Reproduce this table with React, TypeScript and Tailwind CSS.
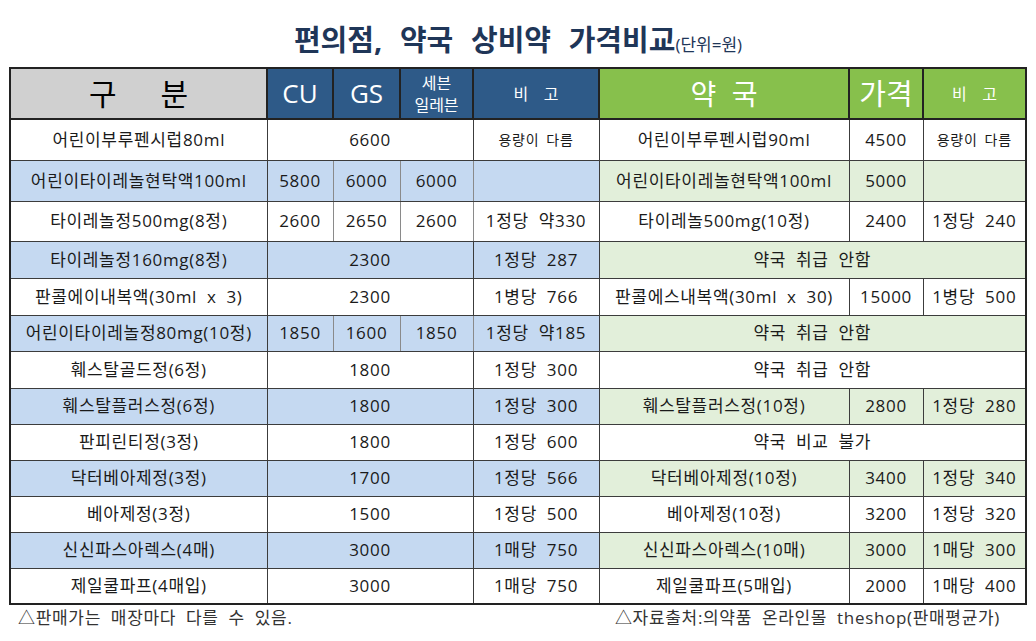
import React from 'react';

type Row = {
  name: string;
  cvs: string[];
  note: string;
  pharmacy: string | [string, string, string];
};

const rows: Row[] = [
  { name: '어린이부루펜시럽80ml', cvs: ['6600'], note: '용량이 다름', pharmacy: ['어린이부루펜시럽90ml', '4500', '용량이 다름'] },
  { name: '어린이타이레놀현탁액100ml', cvs: ['5800', '6000', '6000'], note: '', pharmacy: ['어린이타이레놀현탁액100ml', '5000', ''] },
  { name: '타이레놀정500mg(8정)', cvs: ['2600', '2650', '2600'], note: '1정당 약330', pharmacy: ['타이레놀500mg(10정)', '2400', '1정당 240'] },
  { name: '타이레놀정160mg(8정)', cvs: ['2300'], note: '1정당 287', pharmacy: '약국 취급 안함' },
  { name: '판콜에이내복액(30ml x 3)', cvs: ['2300'], note: '1병당 766', pharmacy: ['판콜에스내복액(30ml x 30)', '15000', '1병당 500'] },
  { name: '어린이타이레놀정80mg(10정)', cvs: ['1850', '1600', '1850'], note: '1정당 약185', pharmacy: '약국 취급 안함' },
  { name: '훼스탈골드정(6정)', cvs: ['1800'], note: '1정당 300', pharmacy: '약국 취급 안함' },
  { name: '훼스탈플러스정(6정)', cvs: ['1800'], note: '1정당 300', pharmacy: ['훼스탈플러스정(10정)', '2800', '1정당 280'] },
  { name: '판피린티정(3정)', cvs: ['1800'], note: '1정당 600', pharmacy: '약국 비교 불가' },
  { name: '닥터베아제정(3정)', cvs: ['1700'], note: '1정당 566', pharmacy: ['닥터베아제정(10정)', '3400', '1정당 340'] },
  { name: '베아제정(3정)', cvs: ['1500'], note: '1정당 500', pharmacy: ['베아제정(10정)', '3200', '1정당 320'] },
  { name: '신신파스아렉스(4매)', cvs: ['3000'], note: '1매당 750', pharmacy: ['신신파스아렉스(10매)', '3000', '1매당 300'] },
  { name: '제일쿨파프(4매입)', cvs: ['3000'], note: '1매당 750', pharmacy: ['제일쿨파프(5매입)', '2000', '1매당 400'] },
];

const rowHeights = ['h-[41px]', 'h-[41px]', 'h-[40px]', 'h-[37px]', 'h-[37px]', 'h-[36px]', 'h-[37px]', 'h-[36px]', 'h-[36px]', 'h-[36px]', 'h-[36px]', 'h-[36px]', 'h-[36px]'];

const td = 'border border-[#3c3c3c] p-0 text-center align-middle whitespace-nowrap';
const th = `${td} border-2 border-[#222] font-normal text-white tracking-normal`;

export default function App() {
  return (
    <div className="w-[1036px] h-[641px] bg-white text-[#1a1a1a] font-['Open_Sans','Noto_Sans_CJK_KR',sans-serif] [word-spacing:0.3em]">
      <div className="h-[67px] flex items-center justify-center pt-[12px]">
        <h1 className="text-[29px] font-bold text-[#1f3658] leading-none [word-spacing:0.35em]">
          편의점, 약국 상비약 가격비교
          <span className="text-[17px] font-normal [word-spacing:0]">(단위=원)</span>
        </h1>
      </div>

      <div className="pl-[9px]">
        <table className="w-[1016px] table-fixed border-collapse border-2 border-[#222] text-[17px] tracking-[0.04em]">
          <colgroup>
            <col className="w-[257px]" />
            <col className="w-[66px]" />
            <col className="w-[67px]" />
            <col className="w-[73px]" />
            <col className="w-[126px]" />
            <col className="w-[250px]" />
            <col className="w-[74px]" />
            <col className="w-[103px]" />
          </colgroup>
          <thead>
            <tr className="h-[51px]">
              <th className={`${th} bg-[#d0d0d0] text-[30px] !text-black`}>
                <span className="inline-flex gap-[44px]">
                  <span>구</span>
                  <span>분</span>
                </span>
              </th>
              <th className={`${th} bg-[#2e5a88] text-[26px]`}>CU</th>
              <th className={`${th} bg-[#2e5a88] text-[26px]`}>GS</th>
              <th className={`${th} bg-[#2e5a88] text-[16px]`}>
                <div className="flex flex-col items-center gap-[2px] leading-[20px]">
                  <span>세븐</span>
                  <span>일레븐</span>
                </div>
              </th>
              <th className={`${th} bg-[#2e5a88] text-[16px] [word-spacing:0.7em]`}>비 고</th>
              <th className={`${th} bg-[#87c04c] text-[28px] [word-spacing:0.3em]`}>약 국</th>
              <th className={`${th} bg-[#87c04c] text-[29px]`}>가격</th>
              <th className={`${th} bg-[#87c04c] text-[16px] [word-spacing:0.7em]`}>비 고</th>
            </tr>
          </thead>
          <tbody>
            {rows.map((row, i) => {
              const tinted = i % 2 === 1;
              const left = tinted ? 'bg-[#c5d9f1]' : 'bg-white';
              const right = tinted ? 'bg-[#e2efda]' : 'bg-white';
              return (
                <tr key={row.name} className={rowHeights[i]}>
                  <td className={`${td} ${left}`}>{row.name}</td>
                  {row.cvs.length === 1 ? (
                    <td colSpan={3} className={`${td} ${left}`}>
                      {row.cvs[0]}
                    </td>
                  ) : (
                    row.cvs.map((price, j) => (
                      <td key={j} className={`${td} ${left} border-x-[#8a8a8a]`}>
                        {price}
                      </td>
                    ))
                  )}
                  <td className={`${td} ${left} ${row.note === '용량이 다름' ? 'text-[14px] [word-spacing:0.2em]' : ''}`}>{row.note}</td>
                  {typeof row.pharmacy === 'string' ? (
                    <td colSpan={3} className={`${td} ${right}`}>
                      {row.pharmacy}
                    </td>
                  ) : (
                    <>
                      <td className={`${td} ${right}`}>{row.pharmacy[0]}</td>
                      <td className={`${td} ${right}`}>{row.pharmacy[1]}</td>
                      <td className={`${td} ${right} ${row.pharmacy[2] === '용량이 다름' ? 'text-[14px] [word-spacing:0.2em]' : ''}`}>
                        {row.pharmacy[2]}
                      </td>
                    </>
                  )}
                </tr>
              );
            })}
          </tbody>
        </table>
      </div>

      <div className="flex justify-between pl-[18px] pr-[36px] text-[17px] tracking-[0.04em] text-[#333] leading-[22px] pt-[2px]">
        <span>△판매가는 매장마다 다를 수 있음.</span>
        <span>△자료출처:의약품 온라인몰 theshop(판매평균가)</span>
      </div>
    </div>
  );
}
